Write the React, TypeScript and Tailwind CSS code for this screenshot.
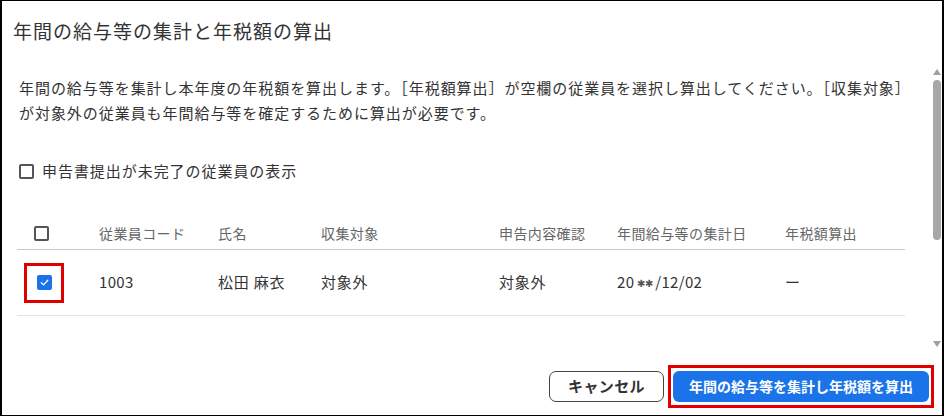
import React from "react";

const font = { fontFamily: '"Noto Sans CJK JP", "Noto Sans", sans-serif' };

function Box({ checked }: { checked?: boolean }) {
  if (checked) {
    return (
      <div className="w-[15px] h-[15px] rounded-[2px] bg-[#1a73e8] flex items-center justify-center">
        <svg width="11" height="11" viewBox="0 0 12 12">
          <path d="M2.5 6.2 L5 8.6 L9.6 3.6" fill="none" stroke="#fff" strokeWidth="1.4" strokeLinecap="round" strokeLinejoin="round" />
        </svg>
      </div>
    );
  }
  return <div className="w-[15px] h-[15px] rounded-[2px] border-2 border-[#555] bg-white" />;
}

export default function App() {
  const cols = "grid grid-cols-[82px_119px_103px_178px_118px_168px_1fr]";
  return (
    <div style={font} className="w-[944px] h-[416px] bg-white border-l-2 border-r-2 border-t border-b border-black flex flex-col text-[#333] overflow-hidden">
      <div className="h-[60px] shrink-0 flex items-center pl-[11px]">
        <h1 className="text-[19px] tracking-[1px] text-[#333] font-normal">年間の給与等の集計と年税額の算出</h1>
      </div>
      <div className="h-[292px] shrink-0 flex">
        <div className="flex-1 pl-[15px] pr-[22px] pt-[14px]">
          <p className="pl-[2px] text-[15px] tracking-[0.95px] leading-[25px]">
            年間の給与等を集計し本年度の年税額を算出します。［年税額算出］が空欄の従業員を選択し算出してください。［収集対象］が対象外の従業員も年間給与等を確定するために算出が必要です。
          </p>
          <div className="pl-[2px] mt-[34px] h-[24px] flex items-center gap-[8px]">
            <Box />
            <span className="text-[15px] tracking-[0.95px]">申告書提出が未完了の従業員の表示</span>
          </div>
          <div className="mt-[34px] w-[888px]">
            <div className={`${cols} h-[33px] items-center border-b border-[#c8c8c8] text-[14px] tracking-[0.4px] text-[#666]`}>
              <div className="pl-[17px]"><Box /></div>
              <div>従業員コード</div>
              <div>氏名</div>
              <div>収集対象</div>
              <div>申告内容確認</div>
              <div>年間給与等の集計日</div>
              <div>年税額算出</div>
            </div>
            <div className={`${cols} h-[66px] items-center border-b border-[#e2e2e2] text-[15px] tracking-[0.8px] text-[#333]`}>
              <div className="pl-[7px]">
                <div className="w-[40px] h-[40px] border-[3px] border-[#e00000] flex items-center justify-center">
                  <Box checked />
                </div>
              </div>
              <div className="tracking-[0.3px]">1003</div>
              <div>松田 麻衣</div>
              <div>対象外</div>
              <div>対象外</div>
              <div className="tracking-[0.3px] flex items-center">
                <span>20</span>
                <span className="text-[10px] font-normal mx-[3px] text-[#555] tracking-[-0.5px]">✱✱</span>
                <span>/12/02</span>
              </div>
              <div>ー</div>
            </div>
          </div>
        </div>
        <div className="w-[13px] shrink-0 flex flex-col items-center pl-[3px] pt-[8px] pb-[6px]">
          <svg width="8" height="6" viewBox="0 0 8 6"><path d="M4 0 L8 6 L0 6 Z" fill="#a0a0a0" /></svg>
          <div className="mt-[5px] w-[8px] h-[160px] rounded-full bg-[#a8a8a8]" />
          <div className="flex-1" />
          <svg width="8" height="6" viewBox="0 0 8 6"><path d="M0 0 L8 0 L4 6 Z" fill="#a0a0a0" /></svg>
        </div>
      </div>
      <div className="flex-1 flex items-center justify-end pr-[8px] pt-[4px] gap-[4px]">
        <button className="w-[115px] h-[31px] rounded-[7px] border-[1.5px] border-[#444] bg-white text-[15px] font-bold text-[#333] tracking-[0.4px]">
          キャンセル
        </button>
        <div className="border-[3px] border-[#e00000] px-[2px] py-[3px]">
          <button className="w-[256px] h-[31px] rounded-[6px] bg-[#1a73e8] text-white text-[14px] font-bold">
            年間の給与等を集計し年税額を算出
          </button>
        </div>
      </div>
    </div>
  );
}
